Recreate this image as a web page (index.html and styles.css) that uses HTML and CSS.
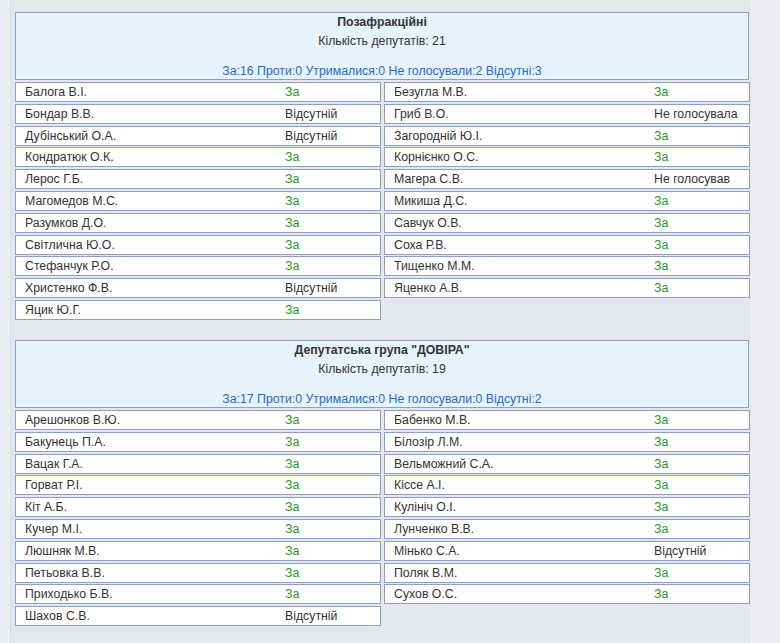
FILE: index.html
```html
<!DOCTYPE html>
<html lang="uk">
<head>
<meta charset="utf-8">
<link rel="stylesheet" href="styles.css">
</head>
<body>
<div class="page">
  <section class="group">
    <div class="head">
      <div class="title">Позафракційні</div>
      <div class="count">Кількість депутатів: 21</div>
      <div class="summary">За:16 Проти:0 Утрималися:0 Не голосували:2 Відсутні:3</div>
    </div>
    <div class="cols">
      <div class="col">
        <div class="row"><span>Балога В.І.</span><span class="yes">За</span></div>
        <div class="row"><span>Бондар В.В.</span><span>Відсутній</span></div>
        <div class="row"><span>Дубінський О.А.</span><span>Відсутній</span></div>
        <div class="row"><span>Кондратюк О.К.</span><span class="yes">За</span></div>
        <div class="row"><span>Лерос Г.Б.</span><span class="yes">За</span></div>
        <div class="row"><span>Магомедов М.С.</span><span class="yes">За</span></div>
        <div class="row"><span>Разумков Д.О.</span><span class="yes">За</span></div>
        <div class="row"><span>Світлична Ю.О.</span><span class="yes">За</span></div>
        <div class="row"><span>Стефанчук Р.О.</span><span class="yes">За</span></div>
        <div class="row"><span>Христенко Ф.В.</span><span>Відсутній</span></div>
        <div class="row"><span>Яцик Ю.Г.</span><span class="yes">За</span></div>
      </div>
      <div class="col">
        <div class="row"><span>Безугла М.В.</span><span class="yes">За</span></div>
        <div class="row"><span>Гриб В.О.</span><span>Не голосувала</span></div>
        <div class="row"><span>Загородній Ю.І.</span><span class="yes">За</span></div>
        <div class="row"><span>Корнієнко О.С.</span><span class="yes">За</span></div>
        <div class="row"><span>Магера С.В.</span><span>Не голосував</span></div>
        <div class="row"><span>Микиша Д.С.</span><span class="yes">За</span></div>
        <div class="row"><span>Савчук О.В.</span><span class="yes">За</span></div>
        <div class="row"><span>Соха Р.В.</span><span class="yes">За</span></div>
        <div class="row"><span>Тищенко М.М.</span><span class="yes">За</span></div>
        <div class="row"><span>Яценко А.В.</span><span class="yes">За</span></div>
      </div>
    </div>
  </section>

  <section class="group">
    <div class="head">
      <div class="title">Депутатська група "ДОВІРА"</div>
      <div class="count">Кількість депутатів: 19</div>
      <div class="summary">За:17 Проти:0 Утрималися:0 Не голосували:0 Відсутні:2</div>
    </div>
    <div class="cols">
      <div class="col">
        <div class="row"><span>Арешонков В.Ю.</span><span class="yes">За</span></div>
        <div class="row"><span>Бакунець П.А.</span><span class="yes">За</span></div>
        <div class="row"><span>Вацак Г.А.</span><span class="yes">За</span></div>
        <div class="row"><span>Горват Р.І.</span><span class="yes">За</span></div>
        <div class="row"><span>Кіт А.Б.</span><span class="yes">За</span></div>
        <div class="row"><span>Кучер М.І.</span><span class="yes">За</span></div>
        <div class="row"><span>Люшняк М.В.</span><span class="yes">За</span></div>
        <div class="row"><span>Петьовка В.В.</span><span class="yes">За</span></div>
        <div class="row"><span>Приходько Б.В.</span><span class="yes">За</span></div>
        <div class="row"><span>Шахов С.В.</span><span>Відсутній</span></div>
      </div>
      <div class="col">
        <div class="row"><span>Бабенко М.В.</span><span class="yes">За</span></div>
        <div class="row"><span>Білозір Л.М.</span><span class="yes">За</span></div>
        <div class="row"><span>Вельможний С.А.</span><span class="yes">За</span></div>
        <div class="row"><span>Кіссе А.І.</span><span class="yes">За</span></div>
        <div class="row"><span>Кулініч О.І.</span><span class="yes">За</span></div>
        <div class="row"><span>Лунченко В.В.</span><span class="yes">За</span></div>
        <div class="row"><span>Мінько С.А.</span><span>Відсутній</span></div>
        <div class="row"><span>Поляк В.М.</span><span class="yes">За</span></div>
        <div class="row"><span>Сухов О.С.</span><span class="yes">За</span></div>
      </div>
    </div>
  </section>
</div>
</body>
</html>
```

FILE: styles.css
```css
html, body {
  margin: 0;
  padding: 0;
}
body {
  background: #eceef1;
  font-family: "Liberation Sans", Arial, sans-serif;
  font-size: 12.3px;
  color: #333;
  height: 643px;
  overflow: hidden;
}
.page {
  margin-left: 10px;
  width: 741px;
  min-height: 643px;
  box-sizing: border-box;
  background: #e4e8ec;
  border-left: 1px solid #d8dce2;
  padding: 12px 2px 17px 4px;
  display: flex;
  flex-direction: column;
  gap: 20px;
}
.group {
  display: flex;
  flex-direction: column;
  gap: 2px;
}
.head {
  box-sizing: border-box;
  width: 734px;
  height: 68px;
  background: #e6f2fc;
  border: 1px solid #8e9dcb;
  text-align: center;
}
.title {
  font-weight: bold;
  line-height: 19px;
}
.count {
  line-height: 19px;
}
.summary {
  margin-top: 12px;
  line-height: 17px;
  color: #1f6cc6;
}
.cols {
  display: grid;
  grid-template-columns: 366px 366px;
  column-gap: 3px;
  align-items: start;
}
.col {
  display: flex;
  flex-direction: column;
  gap: 1.8px;
}
.row {
  box-sizing: border-box;
  height: 20px;
  background: #fff;
  border: 1px solid #8e9dcb;
  display: grid;
  grid-template-columns: 260px 1fr;
  padding: 1px 0 0 9px;
  align-items: center;
  line-height: 17px;
  white-space: nowrap;
}
.yes {
  color: #1f9a1f;
}
```
